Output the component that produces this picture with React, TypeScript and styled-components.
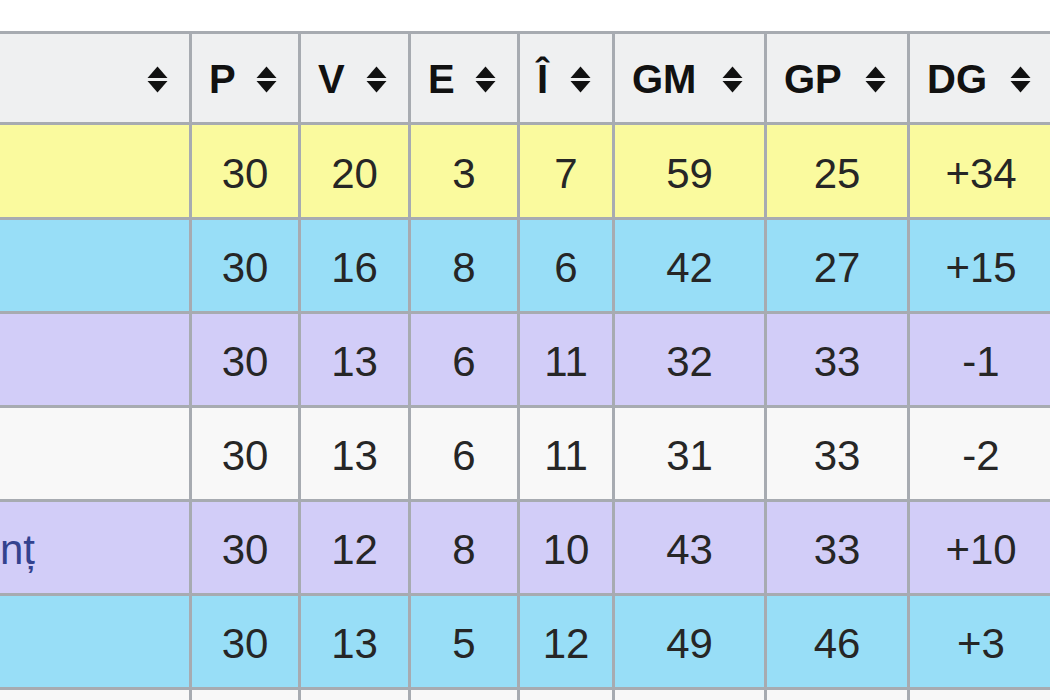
import React from "react";
import styled, { createGlobalStyle } from "styled-components";

const Global = createGlobalStyle`
  html, body {
    margin: 0;
    padding: 0;
    background: #ffffff;
    overflow: hidden;
  }
  body {
    font-family: "Liberation Sans", Arial, sans-serif;
  }
`;

const Page = styled.div`
  width: 1050px;
  height: 700px;
  padding-top: 31px;
  box-sizing: border-box;
  overflow: hidden;
`;

const Table = styled.div`
  display: grid;
  grid-template-columns: 189px 106px 107px 106px 92px 149px 140px 142px;
  grid-template-rows: 88px 92px 91px 91px 91px 91px 91px 91px;
  gap: 3px;
  padding-top: 3px;
  background: #a7abb1;
  width: max-content;
`;

const Row = styled.div`
  display: contents;
`;

const HeadCell = styled.div<{ $end?: boolean }>`
  background: #eff0f1;
  display: flex;
  align-items: center;
  justify-content: ${(p) => (p.$end ? "flex-end" : "space-between")};
  padding: 2px 21px 0 17px;
  font-size: 40px;
  font-weight: bold;
  color: #111;
  line-height: 1;
`;

const Cell = styled.div<{ $bg: string; $left?: boolean }>`
  background: ${(p) => p.$bg};
  display: flex;
  align-items: center;
  justify-content: ${(p) => (p.$left ? "flex-start" : "center")};
  padding-top: 5px;
  font-size: 42px;
  color: #262626;
  line-height: 1;
  white-space: nowrap;
  overflow: hidden;
`;

const Link = styled.span`
  color: #33428f;
`;

const SortIcon = () => (
  <svg width="21" height="27" viewBox="0 0 21 27" aria-hidden="true">
    <polygon points="10.5,0.5 20.5,12 0.5,12" fill="#111" />
    <polygon points="0.5,15 20.5,15 10.5,26.5" fill="#111" />
  </svg>
);

const headers = ["", "P", "V", "E", "Î", "GM", "GP", "DG"];

const YELLOW = "#fafa9e";
const BLUE = "#98def7";
const PURPLE = "#d2cdf8";
const WHITE = "#f8f8f8";

type RowData = { bg: string; name: string; vals: string[] };

const rows: RowData[] = [
  { bg: YELLOW, name: "", vals: ["30", "20", "3", "7", "59", "25", "+34"] },
  { bg: BLUE, name: "", vals: ["30", "16", "8", "6", "42", "27", "+15"] },
  { bg: PURPLE, name: "", vals: ["30", "13", "6", "11", "32", "33", "-1"] },
  { bg: WHITE, name: "", vals: ["30", "13", "6", "11", "31", "33", "-2"] },
  { bg: PURPLE, name: "nț", vals: ["30", "12", "8", "10", "43", "33", "+10"] },
  { bg: BLUE, name: "", vals: ["30", "13", "5", "12", "49", "46", "+3"] },
  { bg: WHITE, name: "", vals: ["", "", "", "", "", "", ""] },
];

export default function App() {
  return (
    <>
      <Global />
      <Page>
        <Table>
          <Row>
            {headers.map((h, i) => (
              <HeadCell key={i} $end={h === ""}>
                {h && <span>{h}</span>}
                <SortIcon />
              </HeadCell>
            ))}
          </Row>
          {rows.map((r, ri) => (
            <Row key={ri}>
              <Cell $bg={r.bg} $left>
                <Link>{r.name}</Link>
              </Cell>
              {r.vals.map((v, vi) => (
                <Cell key={vi} $bg={r.bg}>
                  {v}
                </Cell>
              ))}
            </Row>
          ))}
        </Table>
      </Page>
    </>
  );
}
